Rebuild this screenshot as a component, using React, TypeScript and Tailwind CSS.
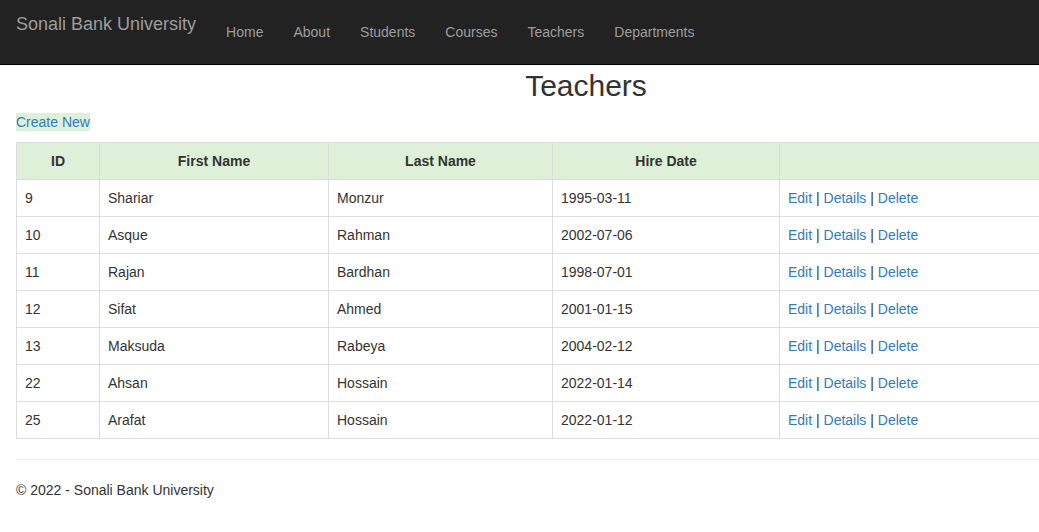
import React from 'react';

const teachers = [
  { id: 9, first: 'Shariar', last: 'Monzur', hire: '1995-03-11' },
  { id: 10, first: 'Asque', last: 'Rahman', hire: '2002-07-06' },
  { id: 11, first: 'Rajan', last: 'Bardhan', hire: '1998-07-01' },
  { id: 12, first: 'Sifat', last: 'Ahmed', hire: '2001-01-15' },
  { id: 13, first: 'Maksuda', last: 'Rabeya', hire: '2004-02-12' },
  { id: 22, first: 'Ahsan', last: 'Hossain', hire: '2022-01-14' },
  { id: 25, first: 'Arafat', last: 'Hossain', hire: '2022-01-12' },
];

const navLinks = ['Home', 'About', 'Students', 'Courses', 'Teachers', 'Departments'];

const App = () => {
  return (
    <div className="w-[1039px] h-[532px] overflow-hidden bg-white font-['Liberation_Sans',Arial,sans-serif] text-[14px] text-[#333]">
      {/* navbar */}
      <div className="flex h-[65px] items-start bg-[#222] border-b border-black">
        <a className="pl-4 pr-[15px] pt-[12px] text-[18px] leading-[24px] text-[#9d9d9d]">
          Sonali Bank University
        </a>
        <ul className="flex pt-[22px]">
          {navLinks.map((l) => (
            <li key={l} className="px-[15px] leading-[20px] text-[#9d9d9d]">
              {l}
            </li>
          ))}
        </ul>
      </div>

      <div className="w-[1156px] pl-4">
        <h2 className="mt-[4px] text-center text-[30px] leading-[33px] font-normal text-[#333]">
          Teachers
        </h2>
        <p className="mt-[10px] mb-[12px] h-[18px]">
          <a className="inline-block h-[18px] leading-[18px] bg-[#dff0d8] text-[#337ab7]">
            Create New
          </a>
        </p>

        <table className="w-[1140px] border-collapse border border-[#ddd]">
          <thead>
            <tr className="bg-[#dff0d8] h-[37px]">
              <th className="w-[83px] border border-[#ddd] px-2 font-bold text-center">ID</th>
              <th className="w-[229px] border border-[#ddd] px-2 font-bold text-center">First Name</th>
              <th className="w-[224px] border border-[#ddd] px-2 font-bold text-center">Last Name</th>
              <th className="w-[227px] border border-[#ddd] px-2 font-bold text-center">Hire Date</th>
              <th className="border border-[#ddd] px-2"></th>
            </tr>
          </thead>
          <tbody>
            {teachers.map((t) => (
              <tr key={t.id} className="h-[37px]">
                <td className="border border-[#ddd] px-2">{t.id}</td>
                <td className="border border-[#ddd] px-2">{t.first}</td>
                <td className="border border-[#ddd] px-2">{t.last}</td>
                <td className="border border-[#ddd] px-2">{t.hire}</td>
                <td className="border border-[#ddd] px-2">
                  <a className="text-[#337ab7]">Edit</a> |{' '}
                  <a className="text-[#337ab7]">Details</a> |{' '}
                  <a className="text-[#337ab7]">Delete</a>
                </td>
              </tr>
            ))}
          </tbody>
        </table>

        <hr className="mt-5 mb-5 border-t border-[#eee]" />
        <footer className="leading-[20px]">
          <p>© 2022 - Sonali Bank University</p>
        </footer>
      </div>
    </div>
  );
};

export default App;
